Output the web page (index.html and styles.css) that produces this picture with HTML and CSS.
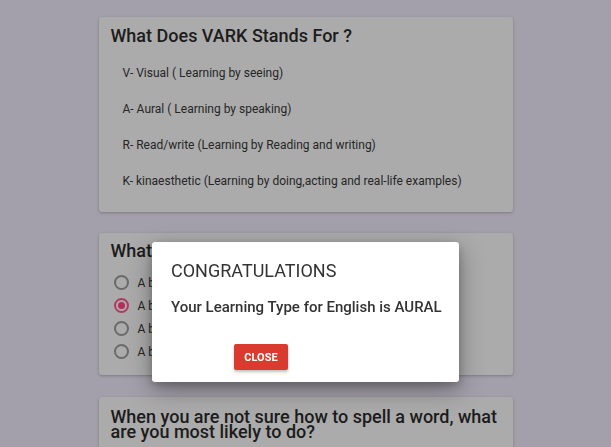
FILE: index.html
```html
<!DOCTYPE html>
<html>
<head>
<meta charset="utf-8">
<link rel="stylesheet" href="styles.css">
</head>
<body>
<div class="page">
  <section class="card card-vark">
    <h2 class="card-title">What Does VARK Stands For ?</h2>
    <ul class="vark-list">
      <li>V- Visual ( Learning by seeing)</li>
      <li>A- Aural ( Learning by speaking)</li>
      <li>R- Read/write (Learning by Reading and writing)</li>
      <li>K- kinaesthetic (Learning by doing,acting and real-life examples)</li>
    </ul>
  </section>
  <section class="card card-question">
    <h2 class="card-title">What do you like best?</h2>
    <div class="options">
      <label class="option"><span class="radio"></span>A book with pictures</label>
      <label class="option"><span class="radio checked"></span>A book on tape</label>
      <label class="option"><span class="radio"></span>A book with words</label>
      <label class="option"><span class="radio"></span>A book to build</label>
    </div>
  </section>
  <section class="card card-next">
    <h2 class="card-title tight">When you are not sure how to spell a word, what are you most likely to do?</h2>
  </section>
</div>
<div class="dialog">
  <div class="dialog-title">CONGRATULATIONS</div>
  <div class="dialog-body">Your Learning Type for English is AURAL</div>
  <button class="btn-close">CLOSE</button>
</div>
</body>
</html>
```
FILE: styles.css
```css
html, body {
  margin: 0;
  padding: 0;
  overflow: hidden;
}
body {
  background: #a4a0ab;
  font-family: Roboto, "Liberation Sans", sans-serif;
  color: #1f1f1f;
  height: 447px;
}
.page {
  width: 414px;
  margin: 0 auto;
  padding-top: 17px;
  display: flex;
  flex-direction: column;
}
.card {
  background: #ababab;
  border-radius: 3px;
  box-shadow: 0 1px 3px rgba(0,0,0,0.25);
  padding: 0 12px;
}
.card-vark {
  height: 195px;
  box-sizing: border-box;
  padding-top: 7px;
}
.card-question {
  margin-top: 21px;
  height: 142px;
  box-sizing: border-box;
  padding-top: 6px;
}
.card-next {
  margin-top: 22px;
  height: 80px;
  box-sizing: border-box;
  padding-top: 12px;
}
.card-title {
  margin: 0;
  font-size: 18px;
  font-weight: 500;
  line-height: 24px;
  color: #1c1c1c;
  white-space: nowrap;
}
.card-title.tight {
  line-height: 15px;
  white-space: normal;
}
.vark-list {
  list-style: none;
  margin: 7px 0 0 0;
  padding: 0 0 0 12px;
}
.vark-list li {
  font-size: 12px;
  line-height: 36px;
  color: #262626;
}
.options {
  margin-top: 8px;
  display: flex;
  flex-direction: column;
}
.option {
  display: flex;
  align-items: center;
  height: 23px;
  font-size: 12px;
  color: #222;
  white-space: nowrap;
}
.radio {
  width: 11px;
  height: 11px;
  border: 2px solid #6a6a6a;
  border-radius: 50%;
  margin: 0 9px 0 3px;
  position: relative;
  flex: none;
}
.radio.checked {
  border-color: #b43a62;
}
.radio.checked::after {
  content: "";
  position: absolute;
  left: 2px;
  top: 2px;
  width: 7px;
  height: 7px;
  border-radius: 50%;
  background: #b52d5c;
}
.dialog {
  position: fixed;
  left: 152px;
  top: 242px;
  width: 307px;
  height: 140px;
  box-sizing: border-box;
  background: #fff;
  border-radius: 3px;
  box-shadow: 0 8px 24px rgba(0,0,0,0.35), 0 3px 8px rgba(0,0,0,0.2);
  padding: 17px 19px 0 19px;
  display: flex;
  flex-direction: column;
  align-items: flex-start;
}
.dialog-title {
  font-size: 18px;
  line-height: 24px;
  color: #333;
  font-weight: 400;
}
.dialog-body {
  margin-top: 14px;
  font-size: 15px;
  line-height: 20px;
  color: #333;
  font-weight: 500;
  white-space: nowrap;
}
.btn-close {
  margin-top: 27px;
  margin-left: 63px;
  width: 54px;
  height: 26px;
  border: none;
  border-radius: 2px;
  background: #d93b2f;
  color: #fff;
  font-family: Roboto, "Liberation Sans", sans-serif;
  font-size: 11px;
  font-weight: 700;
  padding: 0;
  box-shadow: 0 2px 3px rgba(0,0,0,0.25);
}
```
